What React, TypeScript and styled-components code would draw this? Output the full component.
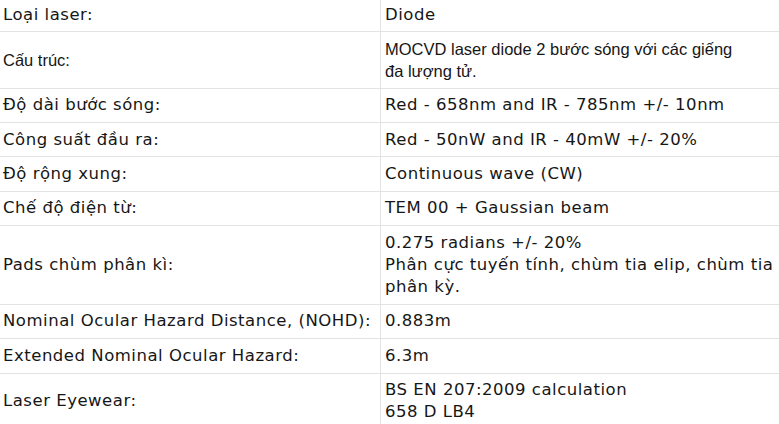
import styled, { createGlobalStyle } from "styled-components";

const GlobalStyle = createGlobalStyle`
  html, body {
    margin: 0;
    padding: 0;
    background: #ffffff;
  }
`;

const SpecTable = styled.table`
  width: 100%;
  margin-top: -3px;
  border-collapse: collapse;
  font-family: "DejaVu Sans", Verdana, sans-serif;
  font-size: 16.5px;
  line-height: 22.3px;
  letter-spacing: 0.52px;
  color: #161616;
`;

const Row = styled.tr`
  border-top: 1px solid #e3e3e3;
  border-bottom: 1px solid #e3e3e3;
`;

const Label = styled.td`
  width: 377px;
  padding: 5.5px 0 5.5px 3px;
  border-right: 1px solid #e3e3e3;
  vertical-align: middle;
  white-space: nowrap;
`;

const Value = styled.td<{ $arial?: boolean }>`
  padding: 5.5px 0 5.5px 4px;
  vertical-align: middle;
  white-space: nowrap;
  font-family: ${(p) =>
    p.$arial ? '"Liberation Sans", Arial, sans-serif' : "inherit"};
  letter-spacing: ${(p) => (p.$arial ? "0" : "inherit")};
`;

const ArialLabel = styled(Label)`
  font-family: "Liberation Sans", Arial, sans-serif;
  letter-spacing: 0;
`;

const rows: { label: string; value: string[]; arial?: boolean }[] = [
  { label: "Loại laser:", value: ["Diode"] },
  {
    label: "Cấu trúc:",
    value: ["MOCVD laser diode 2 bước sóng với các giếng", "đa lượng tử."],
    arial: true,
  },
  { label: "Độ dài bước sóng:", value: ["Red - 658nm and IR - 785nm +/- 10nm"] },
  { label: "Công suất đầu ra:", value: ["Red - 50nW and IR - 40mW +/- 20%"] },
  { label: "Độ rộng xung:", value: ["Continuous wave (CW)"] },
  { label: "Chế độ điện từ:", value: ["TEM 00 + Gaussian beam"] },
  {
    label: "Pads chùm phân kì:",
    value: [
      "0.275 radians +/- 20%",
      "Phân cực tuyến tính, chùm tia elip, chùm tia",
      "phân kỳ.",
    ],
  },
  { label: "Nominal Ocular Hazard Distance, (NOHD):", value: ["0.883m"] },
  { label: "Extended Nominal Ocular Hazard:", value: ["6.3m"] },
  {
    label: "Laser Eyewear:",
    value: ["BS EN 207:2009 calculation", "658 D LB4"],
  },
];

export default function App() {
  return (
    <>
      <GlobalStyle />
      <SpecTable>
        <tbody>
          {rows.map((r) => {
            const L = r.arial ? ArialLabel : Label;
            return (
              <Row key={r.label}>
                <L>{r.label}</L>
                <Value $arial={r.arial}>
                  {r.value.map((line, i) => (
                    <span key={i}>
                      {i > 0 && <br />}
                      {line}
                    </span>
                  ))}
                </Value>
              </Row>
            );
          })}
        </tbody>
      </SpecTable>
    </>
  );
}
